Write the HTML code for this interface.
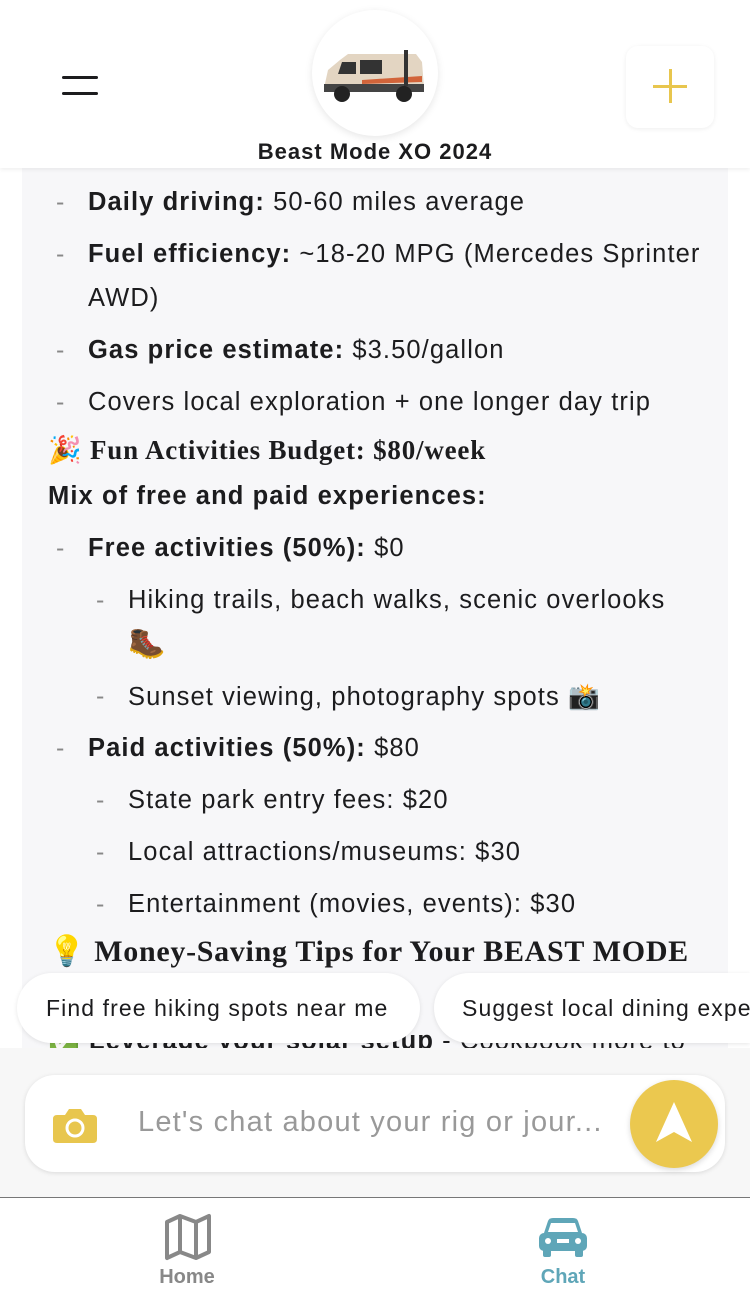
<!DOCTYPE html>
<html><head><meta charset="utf-8"><style>
*{margin:0;padding:0;box-sizing:border-box}
body{width:750px;height:1296px;overflow:hidden;background:#fff;font-family:"Liberation Sans","Noto Sans CJK JP",sans-serif;color:#1c1c1e;position:relative}
.content{position:absolute;left:22px;top:168px;width:706px;height:880px;background:#f7f7f9;overflow:hidden}
.line{position:absolute;font-size:25.5px;white-space:nowrap;letter-spacing:1.1px}
.d{position:absolute;color:#888;font-size:25px}
b{font-weight:700}
.serif{font-family:"Liberation Serif",serif;font-weight:700}
.header{position:absolute;left:0;top:0;width:750px;height:168px;background:#fff;box-shadow:0 2px 4px rgba(0,0,0,.06);z-index:2}
</style></head><body>
<div class="content">
<div class="d" style="left:34px;top:20px">-</div><div class="line" style="left:66px;top:20px"><b>Daily driving:</b> 50-60 miles average</div>
<div class="d" style="left:34px;top:72px">-</div><div class="line" style="left:66px;top:72px"><b>Fuel efficiency:</b> ~18-20 MPG (Mercedes Sprinter</div>
<div class="line" style="left:66px;top:116px">AWD)</div>
<div class="d" style="left:34px;top:168px">-</div><div class="line" style="left:66px;top:168px"><b>Gas price estimate:</b> $3.50/gallon</div>
<div class="d" style="left:34px;top:220px">-</div><div class="line" style="left:66px;top:220px">Covers local exploration + one longer day trip</div>
<div class="line serif" style="left:26px;top:266px;font-size:27px;letter-spacing:0.8px">🎉 Fun Activities Budget: $80/week</div>
<div class="line" style="left:26px;top:314px"><b>Mix of free and paid experiences:</b></div>
<div class="d" style="left:34px;top:366px">-</div><div class="line" style="left:66px;top:366px"><b>Free activities (50%):</b> $0</div>
<div class="d" style="left:74px;top:418px">-</div><div class="line" style="left:106px;top:418px">Hiking trails, beach walks, scenic overlooks</div>
<div class="line" style="left:106px;top:458px;font-size:30px">🥾</div>
<div class="d" style="left:74px;top:514px">-</div><div class="line" style="left:106px;top:514px">Sunset viewing, photography spots 📸</div>
<div class="d" style="left:34px;top:566px">-</div><div class="line" style="left:66px;top:566px"><b>Paid activities (50%):</b> $80</div>
<div class="d" style="left:74px;top:618px">-</div><div class="line" style="left:106px;top:618px">State park entry fees: $20</div>
<div class="d" style="left:74px;top:670px">-</div><div class="line" style="left:106px;top:670px">Local attractions/museums: $30</div>
<div class="d" style="left:74px;top:722px">-</div><div class="line" style="left:106px;top:722px">Entertainment (movies, events): $30</div>
<div class="line serif" style="left:26px;top:766px;font-size:30px;letter-spacing:0.7px">💡 Money-Saving Tips for Your BEAST MODE</div>
<div class="line" style="left:26px;top:858px"><b>✅ Leverage your solar setup</b> - Cookbook more to</div>
</div>
<div class="header">
<div style="position:absolute;left:62px;top:76px;width:36px;height:3px;background:#1c1c1e;border-radius:2px"></div>
<div style="position:absolute;left:62px;top:92px;width:36px;height:3px;background:#1c1c1e;border-radius:2px"></div>
<div style="position:absolute;left:312px;top:10px;width:126px;height:126px;border-radius:50%;background:#fff;box-shadow:0 2px 8px rgba(0,0,0,.1)">
<svg width="126" height="126" viewBox="0 0 126 126"><path d="M12 78 L16 60 L28 50 L36 44 L104 44 L110 52 L112 78 Z" fill="#e3d5c2"/><path d="M30 52 L44 52 L44 64 L26 64 Z" fill="#333"/><rect x="48" y="50" width="22" height="14" fill="#333"/><rect x="12" y="74" width="100" height="8" fill="#444"/><path d="M50 70 L110 66 L110 72 L50 74Z" fill="#d2643a"/><circle cx="30" cy="84" r="8" fill="#222"/><circle cx="92" cy="84" r="8" fill="#222"/><rect x="92" y="40" width="4" height="36" fill="#333"/></svg></div>
<div style="position:absolute;left:0;width:750px;top:139px;text-align:center;font-size:22px;font-weight:700;color:#1c1c1e;letter-spacing:1px">Beast Mode XO 2024</div>
<div style="position:absolute;left:626px;top:46px;width:88px;height:82px;border-radius:12px;background:#fff;box-shadow:0 1px 5px rgba(0,0,0,.07)">
<div style="position:absolute;left:27px;top:39px;width:34px;height:3px;background:#e8c64e"></div>
<div style="position:absolute;left:43px;top:23px;width:3px;height:34px;background:#e8c64e"></div></div>
</div>
<div style="position:absolute;left:17px;top:973px;width:403px;height:70px;border-radius:35px;background:#fff;box-shadow:0 1px 5px rgba(0,0,0,.1);font-size:23px;letter-spacing:1.1px;line-height:70px;padding-left:29px;white-space:nowrap;z-index:3">Find free hiking spots near me</div>
<div style="position:absolute;left:434px;top:973px;width:316px;height:70px;border-radius:35px 0 0 35px;background:#fff;box-shadow:0 1px 5px rgba(0,0,0,.1);font-size:23px;letter-spacing:1.1px;line-height:70px;padding-left:28px;white-space:nowrap;overflow:hidden;z-index:3">Suggest local dining experiences</div>
<div style="position:absolute;left:0;top:1048px;width:750px;height:150px;background:#f7f7f7;border-bottom:1px solid #777;z-index:2">
<div style="position:absolute;left:25px;top:27px;width:700px;height:97px;border-radius:30px;background:#fff;box-shadow:0 1px 5px rgba(0,0,0,.12)">
<svg style="position:absolute;left:28px;top:32px" width="44" height="36" viewBox="0 0 44 36"><path d="M4 8 H12 L16 2 H28 L32 8 H40 Q44 8 44 12 V32 Q44 36 40 36 H4 Q0 36 0 32 V12 Q0 8 4 8Z" fill="#e8c64e"/><circle cx="22" cy="21" r="8" fill="none" stroke="#fff" stroke-width="3"/></svg>
<div style="position:absolute;left:113px;top:31px;font-size:29px;letter-spacing:1.2px;color:#999;white-space:nowrap">Let's chat about your rig or jour...</div>
</div>
<div style="position:absolute;left:630px;top:32px;width:88px;height:88px;border-radius:50%;background:#ebc84f;box-shadow:0 2px 6px rgba(0,0,0,.15)">
<svg style="position:absolute;left:24px;top:20px" width="40" height="46" viewBox="0 0 40 46"><path d="M20 2 L38 42 L20 32 L2 42Z" fill="#fff"/></svg></div>
</div>
<div style="position:absolute;left:0;top:1199px;width:750px;height:97px;background:#fff">
<svg style="position:absolute;left:164px;top:14px" width="48" height="48" viewBox="0 0 48 48"><path d="M3 9 L16 3 L32 9 L45 3 V39 L32 45 L16 39 L3 45Z M16 3 V39 M32 9 V45" fill="none" stroke="#888" stroke-width="4" stroke-linejoin="round"/></svg>
<div style="position:absolute;left:0;width:374px;top:67px;text-align:center;font-size:20px;font-weight:700;color:#888">Home</div>
<svg style="position:absolute;left:538px;top:18px" width="50" height="40" viewBox="0 0 50 40"><path d="M10 4 Q11 1 15 1 H35 Q39 1 40 4 L44 16 H6Z" fill="#5fa6b8"/><rect x="1" y="16" width="48" height="18" rx="5" fill="#5fa6b8"/><rect x="5" y="30" width="8" height="10" rx="2" fill="#5fa6b8"/><rect x="37" y="30" width="8" height="10" rx="2" fill="#5fa6b8"/><path d="M13 6 H37 L40 15 H10Z" fill="#fff"/><circle cx="10" cy="24" r="3" fill="#fff"/><circle cx="40" cy="24" r="3" fill="#fff"/><rect x="19" y="22" width="12" height="4" fill="#fff"/></svg>
<div style="position:absolute;left:376px;width:374px;top:67px;text-align:center;font-size:20px;font-weight:700;color:#5fa6b8">Chat</div>
</div>
</body></html>
